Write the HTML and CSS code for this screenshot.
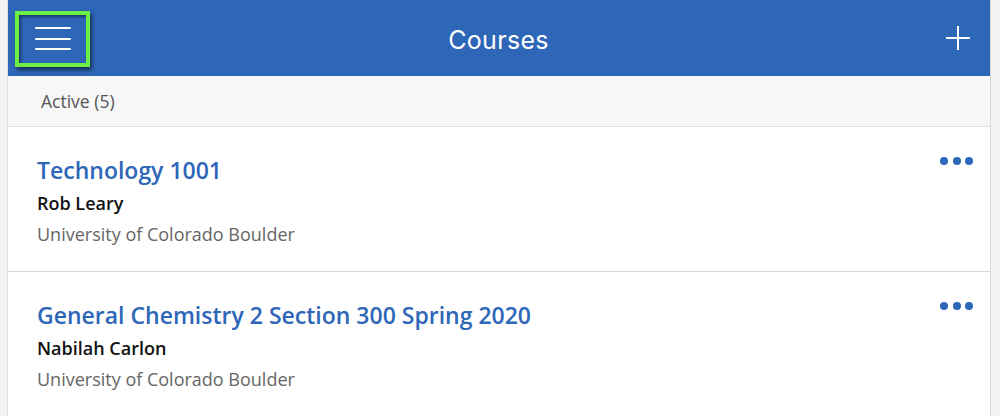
FILE: index.html
```html
<!DOCTYPE html>
<html lang="en">
<head>
<meta charset="utf-8">
<title>Courses</title>
<link rel="stylesheet" href="styles.css">
</head>
<body>
<div class="panel">
  <header class="topbar">
    <button class="menu-btn" aria-label="Menu">
      <span class="bar"></span><span class="bar"></span><span class="bar"></span>
    </button>
    <h1 class="title">Courses</h1>
    <button class="add-btn" aria-label="Add course">
      <svg width="26" height="26" viewBox="0 0 26 26"><path d="M13 1v24M1 13h24" stroke="#fff" stroke-width="2" fill="none"/></svg>
    </button>
  </header>
  <div class="subhead">Active (5)</div>
  <div class="card">
    <div class="card-body">
      <div class="course-name">Technology 1001</div>
      <div class="instructor">Rob Leary</div>
      <div class="school">University of Colorado Boulder</div>
    </div>
    <button class="more" aria-label="More"><span></span><span></span><span></span></button>
  </div>
  <div class="card">
    <div class="card-body">
      <div class="course-name">General Chemistry 2 Section 300 Spring 2020</div>
      <div class="instructor">Nabilah Carlon</div>
      <div class="school">University of Colorado Boulder</div>
    </div>
    <button class="more" aria-label="More"><span></span><span></span><span></span></button>
  </div>
</div>
</body>
</html>
```

FILE: styles.css
```css
html, body {
  margin: 0;
  padding: 0;
  background: #f3f3f3;
  font-family: "Open Sans", "Noto Sans", sans-serif;
}

.panel {
  margin-left: 7px;
  width: 982px;
  border-left: 1px solid #dcdcdc;
  border-right: 1px solid #dcdcdc;
  background: #fff;
  min-height: 416px;
}

.topbar {
  height: 76px;
  background: #2e66b8;
  display: grid;
  grid-template-columns: 1fr auto 1fr;
  align-items: center;
  padding: 0 19px 0 7px;
  box-sizing: border-box;
}

.menu-btn {
  justify-self: start;
  width: 75px;
  height: 56px;
  margin-top: 1px;
  box-sizing: border-box;
  border: 4px solid #6def46;
  background: transparent;
  box-shadow: 2px 3px 4px rgba(0, 0, 0, 0.55), inset 2px 2px 3px rgba(0, 0, 0, 0.45);
  display: flex;
  flex-direction: column;
  align-items: center;
  justify-content: center;
  gap: 8.5px;
  padding: 0;
}

.bar {
  display: block;
  width: 36px;
  height: 2px;
  background: #fff;
  border-radius: 1px;
}

.title {
  margin: 0 0 0 11px;
  font-family: Inter, "Noto Sans", sans-serif;
  font-weight: 400;
  font-size: 25px;
  line-height: 30px;
  padding-top: 3px;
  color: #fff;
  letter-spacing: 0.3px;
}

.add-btn {
  justify-self: end;
  background: transparent;
  border: 0;
  padding: 0;
  width: 26px;
  height: 26px;
  display: flex;
}

.subhead {
  height: 50px;
  background: #f7f7f7;
  border-bottom: 1px solid #dddddd;
  display: flex;
  align-items: center;
  padding-left: 33px;
  font-size: 17.5px;
  color: #555;
}

.card {
  display: flex;
  justify-content: space-between;
  align-items: flex-start;
  padding: 27px 17px 23px 29px;
  border-bottom: 1px solid #d9d9d9;
}

.course-name {
  font-size: 23px;
  font-weight: 600;
  line-height: 32px;
  color: #2e66b8;
}

.instructor {
  font-size: 18px;
  font-weight: 600;
  line-height: 34px;
  color: #111;
}

.school {
  font-size: 18px;
  line-height: 28px;
  color: #666;
}

.more {
  background: transparent;
  border: 0;
  padding: 0;
  margin-top: 3px;
  display: flex;
  gap: 4.5px;
}

.more span {
  display: block;
  width: 8px;
  height: 8px;
  border-radius: 50%;
  background: #2e66b8;
}
```
